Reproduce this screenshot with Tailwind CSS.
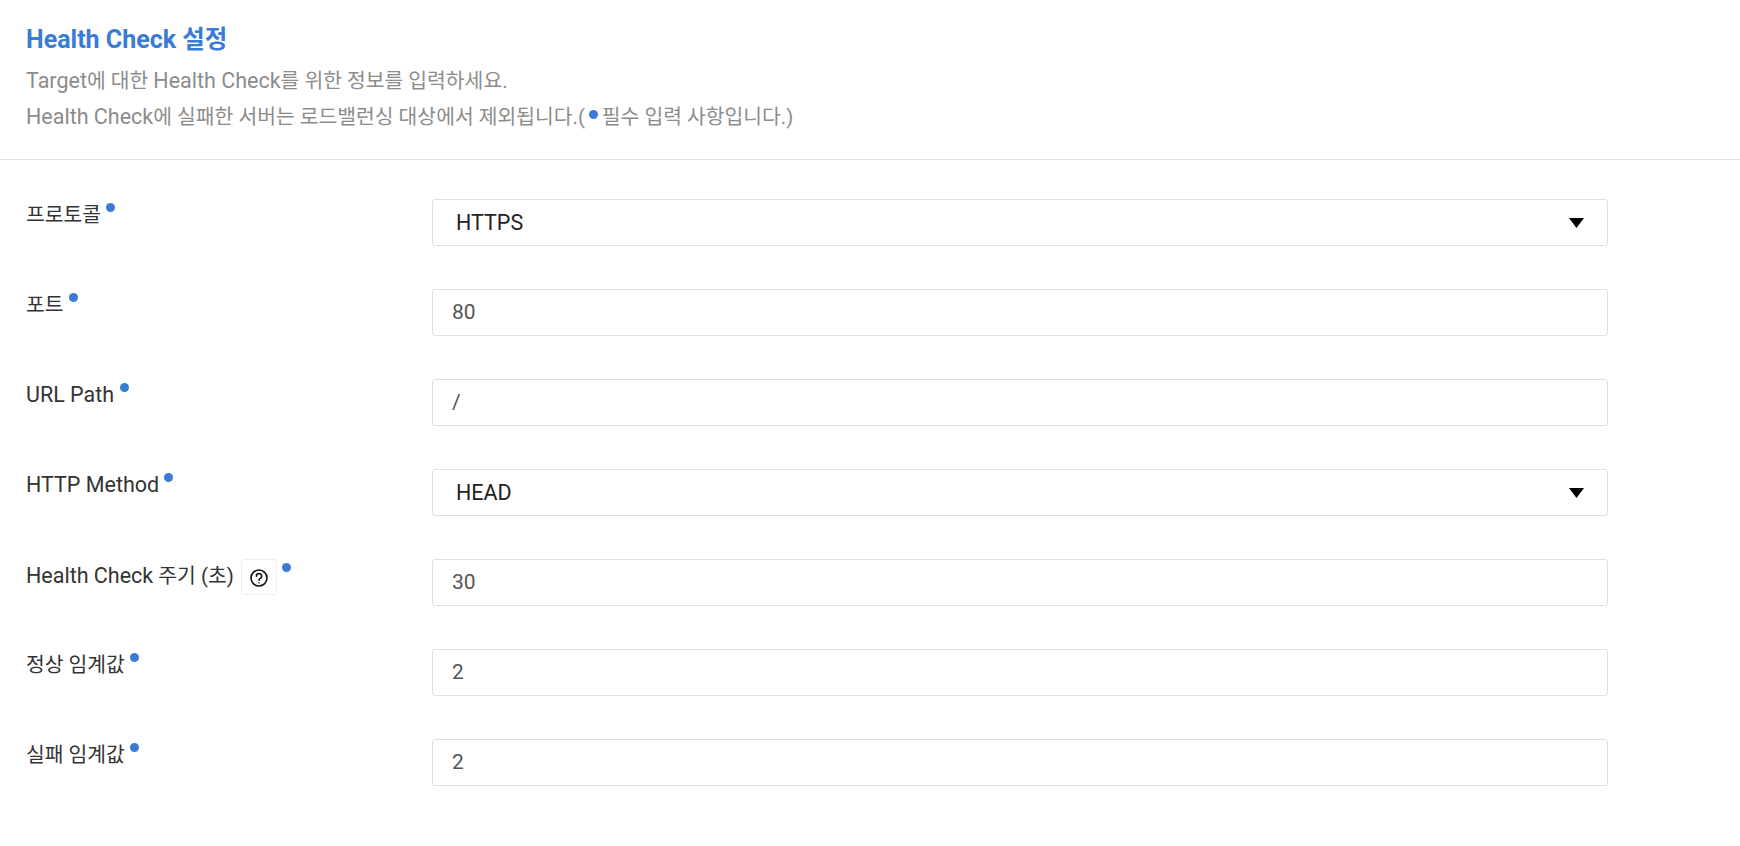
<!DOCTYPE html>
<html lang="ko">
<head>
    <meta charset="UTF-8">
    <title>Health Check 설정</title>
    <script src="https://cdn.jsdelivr.net/npm/@tailwindcss/browser@4"></script>
</head>
<body class="bg-white font-['Roboto','Noto_Sans_CJK_KR',sans-serif]">

    <!-- Header -->
    <div class="h-[160px] border-b border-[#e0e0e0] pl-[26px] pt-[23px]">
        <h2 class="text-[24.5px] leading-[34px] font-bold text-[#3a7bd5]"><span class="text-[25px]">Health Check</span> 설정</h2>
        <p class="mt-[6px] text-[20.4px] leading-[36px] text-[#8c8c8c]"><span class="text-[21.5px]">Target</span>에 대한 <span class="text-[21.5px]">Health Check</span>를 위한 정보를 입력하세요.</p>
        <p class="text-[20.4px] leading-[36px] text-[#8c8c8c]"><span class="text-[21.5px]">Health Check</span>에 실패한 서버는 로드밸런싱 대상에서 제외됩니다.(<span class="inline-block w-[9px] h-[9px] mx-[4px] mb-[8px] align-middle rounded-full bg-[#3a7bd5]"></span>필수 입력 사항입니다.)</p>
    </div>

    <!-- Form -->
    <div class="pl-[26px] pt-[39px] flex flex-col gap-[43px]">
        <div class="flex">
            <div class="w-[406px] flex items-start text-[20.4px] leading-[28px] text-[#333] pt-[2px]"><span>프로토콜</span><span class="w-[9px] h-[9px] ml-[5px] mt-[2px] rounded-full bg-[#3a7bd5]"></span></div>
            <div class="w-[1176px] h-[47px] border border-[#e0e0e0] rounded-[3px] flex items-center justify-between pl-[23px] pr-[23px] pt-[1px] text-[21.5px] text-[#222]">HTTPS
                <svg class="-mt-[1px]" width="15" height="10" viewBox="0 0 15 10"><path d="M0 0h15L7.5 10z" fill="#000"/></svg>
            </div>
        </div>
        <div class="flex">
            <div class="w-[406px] flex items-start text-[20.4px] leading-[28px] text-[#333] pt-[2px]"><span>포트</span><span class="w-[9px] h-[9px] ml-[5px] mt-[2px] rounded-full bg-[#3a7bd5]"></span></div>
            <div class="w-[1176px] h-[47px] border border-[#e0e0e0] rounded-[3px] flex items-center pl-[19px] pt-[1px] text-[21px] text-[#555]">80</div>
        </div>
        <div class="flex">
            <div class="w-[406px] flex items-start text-[21.5px] leading-[28px] text-[#333] pt-[2px]"><span>URL Path</span><span class="w-[9px] h-[9px] ml-[6px] mt-[2px] rounded-full bg-[#3a7bd5]"></span></div>
            <div class="w-[1176px] h-[47px] border border-[#e0e0e0] rounded-[3px] flex items-center pl-[19px] pt-[1px] text-[21px] text-[#555]">/</div>
        </div>
        <div class="flex">
            <div class="w-[406px] flex items-start text-[21.5px] leading-[28px] text-[#333] pt-[2px]"><span>HTTP Method</span><span class="w-[9px] h-[9px] ml-[5px] mt-[2px] rounded-full bg-[#3a7bd5]"></span></div>
            <div class="w-[1176px] h-[47px] border border-[#e0e0e0] rounded-[3px] flex items-center justify-between pl-[23px] pr-[23px] pt-[1px] text-[21.5px] text-[#222]">HEAD
                <svg class="-mt-[1px]" width="15" height="10" viewBox="0 0 15 10"><path d="M0 0h15L7.5 10z" fill="#000"/></svg>
            </div>
        </div>
        <div class="flex">
            <div class="w-[406px] flex items-start text-[20.4px] leading-[28px] text-[#333] pt-[3px]">
                <span><span class="text-[21.5px]">Health Check</span> 주기 (초)</span>
                <span class="w-[36px] h-[36px] ml-[7px] -mt-[3px] border border-[#eeeeee] rounded-[3px] flex items-center justify-center pt-[2px]">
                    <svg width="18" height="18" viewBox="0 0 18 18" fill="none" stroke="#111" stroke-width="1.6"><circle cx="9" cy="9" r="8"/><path d="M6.4 7.2a2.6 2.6 0 1 1 3.9 2.2c-.9.5-1.3 1-1.3 1.9" stroke-linecap="round"/><path d="M9 13.2v1.1"/></svg>
                </span>
                <span class="w-[9px] h-[9px] ml-[5px] mt-[1px] rounded-full bg-[#3a7bd5]"></span>
            </div>
            <div class="w-[1176px] h-[47px] border border-[#e0e0e0] rounded-[3px] flex items-center pl-[19px] pt-[1px] text-[21px] text-[#555]">30</div>
        </div>
        <div class="flex">
            <div class="w-[406px] flex items-start text-[20.4px] leading-[28px] text-[#333] pt-[2px]"><span>정상 임계값</span><span class="w-[9px] h-[9px] ml-[5px] mt-[2px] rounded-full bg-[#3a7bd5]"></span></div>
            <div class="w-[1176px] h-[47px] border border-[#e0e0e0] rounded-[3px] flex items-center pl-[19px] pt-[1px] text-[21px] text-[#555]">2</div>
        </div>
        <div class="flex">
            <div class="w-[406px] flex items-start text-[20.4px] leading-[28px] text-[#333] pt-[2px]"><span>실패 임계값</span><span class="w-[9px] h-[9px] ml-[5px] mt-[2px] rounded-full bg-[#3a7bd5]"></span></div>
            <div class="w-[1176px] h-[47px] border border-[#e0e0e0] rounded-[3px] flex items-center pl-[19px] pt-[1px] text-[21px] text-[#555]">2</div>
        </div>
    </div>

</body>
</html>
